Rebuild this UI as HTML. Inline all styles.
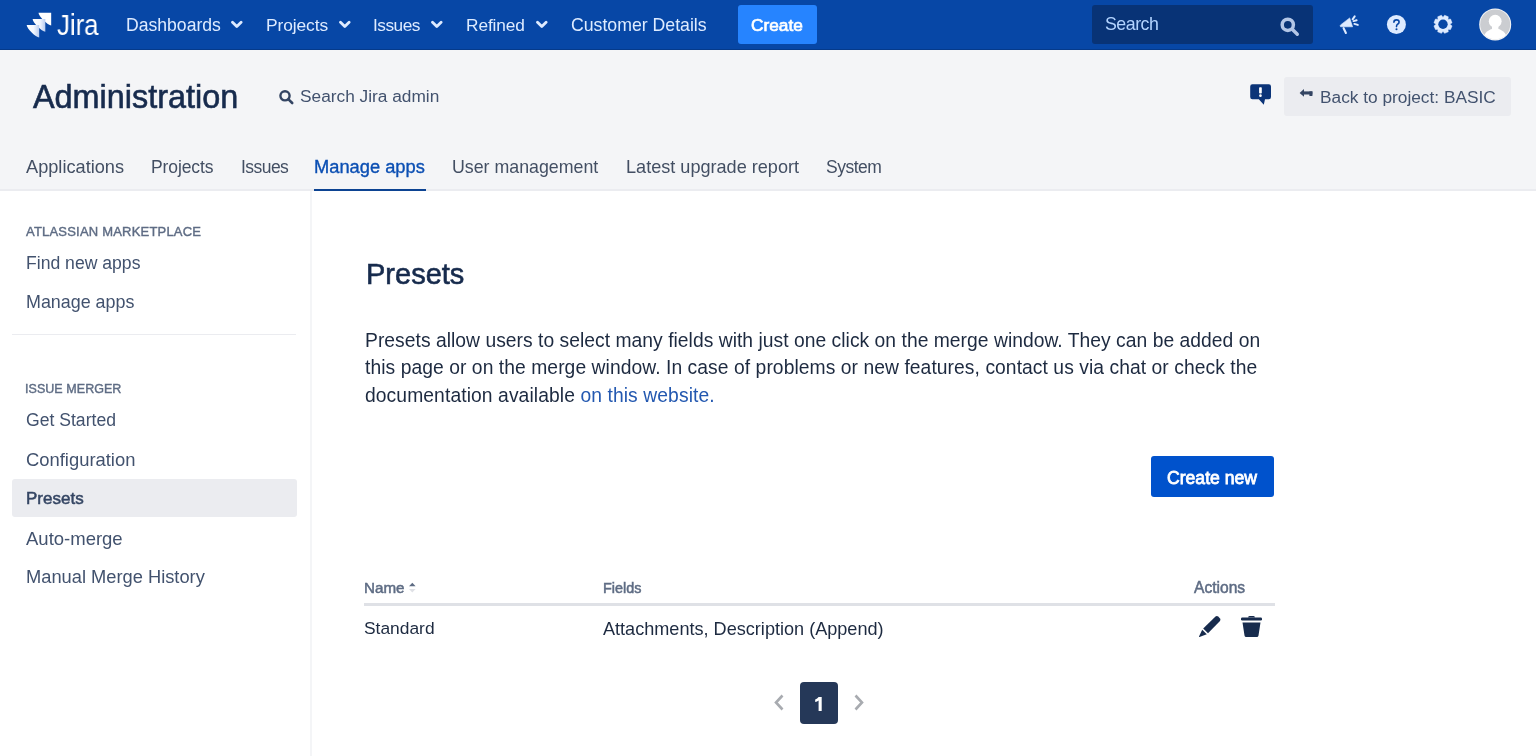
<!DOCTYPE html>
<html><head><meta charset="utf-8"><title>Presets - Administration</title>
<style>
html,body{margin:0;padding:0;width:1536px;height:756px;overflow:hidden;background:#fff;}
body{position:relative;font-family:"Liberation Sans",sans-serif;}
.t{position:absolute;white-space:nowrap;will-change:transform;}
</style></head><body>
<div style="position:absolute;left:0;top:0;width:1536px;height:50px;background:#0747a6"></div>
<div style="position:absolute;left:0;top:49px;width:1536px;height:1px;background:#053a8a"></div>
<svg style="position:absolute;left:0;top:0" width="60" height="50" viewBox="0 0 60 50"><defs><linearGradient id="lg" x1="0" y1="0" x2="1" y2="0"><stop offset="0" stop-color="#ffffff"/><stop offset="0.55" stop-color="#f4f8ff"/><stop offset="1" stop-color="#b9cdf0"/></linearGradient></defs><path d="M38.5 12.7 L51.2 12.7 L51.2 25.4 C47.77 25.4 38.5 16.13 38.5 12.7 Z" fill="#fff"/><path d="M32.6 19.0 L45.3 19.0 L45.3 31.7 C41.87 31.7 32.6 22.43 32.6 19.0 Z" fill="url(#lg)"/><path d="M26.7 25.0 L39.2 25.0 L39.2 37.5 C35.83 37.5 26.7 28.38 26.7 25.0 Z" fill="url(#lg)"/></svg>
<div class="t" style="left:57px;top:11.45px;font-size:29px;line-height:29px;color:#ffffff;font-weight:400;transform:scaleX(0.89);transform-origin:0 0;">Jira</div>

<div class="t" style="left:126px;top:16.60px;font-size:17.6px;line-height:17.6px;color:#deebff;font-weight:400;letter-spacing:0px;">Dashboards</div>

<svg style="position:absolute;left:231px;top:19px" width="12" height="11" viewBox="0 0 12 11"><path d="M1.5 3.2 L5.8 7.5 L10.1 3.2" stroke="#deebff" stroke-width="2.8" fill="none" stroke-linecap="round" stroke-linejoin="round"/></svg>
<div class="t" style="left:266px;top:16.77px;font-size:17.4px;line-height:17.4px;color:#deebff;font-weight:400;letter-spacing:-0.1px;">Projects</div>

<svg style="position:absolute;left:339px;top:19px" width="12" height="11" viewBox="0 0 12 11"><path d="M1.5 3.2 L5.8 7.5 L10.1 3.2" stroke="#deebff" stroke-width="2.8" fill="none" stroke-linecap="round" stroke-linejoin="round"/></svg>
<div class="t" style="left:373px;top:16.86px;font-size:17.3px;line-height:17.3px;color:#deebff;font-weight:400;letter-spacing:-0.5px;">Issues</div>

<svg style="position:absolute;left:431px;top:19px" width="12" height="11" viewBox="0 0 12 11"><path d="M1.5 3.2 L5.8 7.5 L10.1 3.2" stroke="#deebff" stroke-width="2.8" fill="none" stroke-linecap="round" stroke-linejoin="round"/></svg>
<div class="t" style="left:466px;top:16.86px;font-size:17.3px;line-height:17.3px;color:#deebff;font-weight:400;letter-spacing:-0.1px;">Refined</div>

<svg style="position:absolute;left:536px;top:19px" width="12" height="11" viewBox="0 0 12 11"><path d="M1.5 3.2 L5.8 7.5 L10.1 3.2" stroke="#deebff" stroke-width="2.8" fill="none" stroke-linecap="round" stroke-linejoin="round"/></svg>
<div class="t" style="left:570.5px;top:16.52px;font-size:17.7px;line-height:17.7px;color:#deebff;font-weight:400;">Customer Details</div>

<div style="position:absolute;left:738px;top:5px;width:79px;height:39px;background:#2684ff;border-radius:3px"></div>
<div class="t" style="left:751px;top:16.86px;font-size:17.3px;line-height:17.3px;color:#ffffff;font-weight:400;-webkit-text-stroke:0.7px #fff;">Create</div>

<div style="position:absolute;left:1092px;top:5px;width:221px;height:39px;background:#083376;border-radius:3px"></div>
<div class="t" style="left:1105px;top:15.93px;font-size:17.8px;line-height:17.8px;color:#b3d4ff;font-weight:400;letter-spacing:-0.5px;">Search</div>

<svg style="position:absolute;left:1278px;top:15px" width="24" height="24" viewBox="0 0 24 24"><circle cx="9.8" cy="9.8" r="5.6" stroke="#b3c6e6" stroke-width="3.5" fill="none"/><path d="M14 14 L19.3 19.3" stroke="#b3c6e6" stroke-width="3.4" stroke-linecap="round"/></svg>
<svg style="position:absolute;left:1336px;top:12px" width="26" height="26" viewBox="0 0 26 26">
<path d="M4.6 12.9 Q3.6 13.9 4.6 14.8 L16.6 14.8 L13.7 5.9 Z" fill="#deebff" stroke="#deebff" stroke-width="0.6" stroke-linejoin="round"/>
<path d="M7.6 16.2 L9.9 21" stroke="#deebff" stroke-width="2.1" stroke-linecap="round"/>
<path d="M16.6 7.3 L18.7 4.4" stroke="#deebff" stroke-width="2" stroke-linecap="round"/>
<path d="M17.5 9.1 L20.6 8.3" stroke="#deebff" stroke-width="2" stroke-linecap="round"/>
<path d="M18.4 11.9 L21.8 12.9" stroke="#deebff" stroke-width="2" stroke-linecap="round"/>
</svg>
<svg style="position:absolute;left:1384px;top:12px" width="25" height="25" viewBox="0 0 25 25">
<circle cx="12.4" cy="12.5" r="9.5" fill="#deebff"/>
<path d="M9.9 10.3 Q9.9 7.9 12.5 7.9 Q15.1 7.9 15.1 10.1 Q15.1 11.5 13.6 12.3 Q12.5 12.9 12.5 14.6" stroke="#0747a6" stroke-width="1.6" fill="none" stroke-linecap="round"/>
<circle cx="12.5" cy="17.3" r="1.05" fill="#0747a6"/>
</svg>
<svg style="position:absolute;left:1430px;top:12px" width="26" height="26" viewBox="0 0 26 26">
<path d="M19.90 12.25 L22.06 13.88 L20.53 17.59 L17.84 17.21 L17.91 17.14 L18.29 19.83 L14.58 21.36 L12.95 19.20 L13.05 19.20 L11.42 21.36 L7.71 19.83 L8.09 17.14 L8.16 17.21 L5.47 17.59 L3.94 13.88 L6.10 12.25 L6.10 12.35 L3.94 10.72 L5.47 7.01 L8.16 7.39 L8.09 7.46 L7.71 4.77 L11.42 3.24 L13.05 5.40 L12.95 5.40 L14.58 3.24 L18.29 4.77 L17.91 7.46 L17.84 7.39 L20.53 7.01 L22.06 10.72 L19.90 12.35 Z" fill="#deebff" stroke="#deebff" stroke-width="0.5" stroke-linejoin="round"/>
<circle cx="13" cy="12.3" r="4.7" fill="#0747a6"/>
</svg>
<svg style="position:absolute;left:1478px;top:7px" width="35" height="35" viewBox="0 0 35 35">
<defs><clipPath id="av"><circle cx="17.2" cy="17.4" r="15"/></clipPath></defs>
<circle cx="17.2" cy="17.4" r="16" fill="#f4f5f7"/>
<circle cx="17.2" cy="17.4" r="15" fill="#cbcdd1"/>
<g clip-path="url(#av)"><circle cx="17.2" cy="14.2" r="6.4" fill="#fff"/><rect x="14" y="17" width="6.4" height="6" fill="#fff"/><ellipse cx="17.2" cy="31.5" rx="11.5" ry="10" fill="#fff"/></g>
</svg>
<div style="position:absolute;left:0;top:50px;width:1536px;height:141px;background:#f4f5f7"></div>
<div style="position:absolute;left:0;top:189px;width:1536px;height:2px;background:#ebecf0"></div>
<div class="t" style="left:32.5px;top:80.87px;font-size:32.4px;line-height:32.4px;color:#172b4d;font-weight:400;-webkit-text-stroke:0.6px #172b4d;">Administration</div>

<svg style="position:absolute;left:278px;top:89px" width="17" height="16" viewBox="0 0 17 16"><circle cx="7" cy="6.8" r="4.6" stroke="#344563" stroke-width="2.4" fill="none"/><path d="M10.5 10.3 L14.2 14" stroke="#344563" stroke-width="2.6" stroke-linecap="round"/></svg>
<div class="t" style="left:300.2px;top:88.46px;font-size:17.3px;line-height:17.3px;color:#42526e;font-weight:400;">Search Jira admin</div>

<svg style="position:absolute;left:1248px;top:82px" width="25" height="25" viewBox="0 0 25 25">
<path d="M4.4 2.2 L20.8 2.2 Q23 2.2 23 4.4 L23 15.1 Q23 17.3 20.8 17.3 L17 17.3 L15.8 22.7 L10.8 17.3 L4.4 17.3 Q2.2 17.3 2.2 15.1 L2.2 4.4 Q2.2 2.2 4.4 2.2 Z" fill="#0b3478"/>
<rect x="11.1" y="5.3" width="2.7" height="6.2" rx="0.8" fill="#fff"/><circle cx="12.45" cy="13.7" r="1.35" fill="#fff"/>
</svg>
<div style="position:absolute;left:1284px;top:77px;width:227px;height:39px;background:#ebecf0;border-radius:3px"></div>
<svg style="position:absolute;left:1298px;top:86px" width="16" height="14" viewBox="0 0 16 14"><path d="M1.6 6.9 L6 2.9 L6 10.8 Z" fill="#344563"/><rect x="5" y="5.4" width="9.4" height="3.1" fill="#344563"/><rect x="11.4" y="5.4" width="3" height="4.6" fill="#344563"/></svg>
<div class="t" style="left:1320px;top:88.56px;font-size:17.3px;line-height:17.3px;color:#42526e;font-weight:400;">Back to project: BASIC</div>

<div class="t" style="left:25.8px;top:158.19px;font-size:18.2px;line-height:18.2px;color:#434f63;font-weight:400;letter-spacing:0px;">Applications</div>

<div class="t" style="left:151px;top:158.79px;font-size:17.5px;line-height:17.5px;color:#434f63;font-weight:400;letter-spacing:-0.1px;">Projects</div>

<div class="t" style="left:240.6px;top:158.79px;font-size:17.5px;line-height:17.5px;color:#434f63;font-weight:400;letter-spacing:-0.55px;">Issues</div>

<div class="t" style="left:314.2px;top:158.11px;font-size:18.3px;line-height:18.3px;color:#0b4fb3;font-weight:400;letter-spacing:0px;-webkit-text-stroke:0.35px #0b4fb3;">Manage apps</div>

<div class="t" style="left:452px;top:158.53px;font-size:17.8px;line-height:17.8px;color:#434f63;font-weight:400;letter-spacing:0px;">User management</div>

<div class="t" style="left:625.7px;top:158.28px;font-size:18.1px;line-height:18.1px;color:#434f63;font-weight:400;letter-spacing:0px;">Latest upgrade report</div>

<div class="t" style="left:826.3px;top:158.79px;font-size:17.5px;line-height:17.5px;color:#434f63;font-weight:400;letter-spacing:-0.5px;">System</div>

<div style="position:absolute;left:314px;top:189px;width:111.5px;height:2px;background:#0c4392"></div>
<div style="position:absolute;left:310px;top:191px;width:2px;height:565px;background:#f4f5f7"></div>
<div class="t" style="left:26px;top:224.60px;font-size:13.0px;line-height:13.0px;color:#5e6c84;font-weight:400;letter-spacing:0.2px;-webkit-text-stroke:0.4px #5e6c84;">ATLASSIAN MARKETPLACE</div>

<div class="t" style="left:26px;top:255.10px;font-size:17.6px;line-height:17.6px;color:#42526e;font-weight:400;">Find new apps</div>

<div class="t" style="left:26px;top:293.85px;font-size:17.9px;line-height:17.9px;color:#42526e;font-weight:400;">Manage apps</div>

<div style="position:absolute;left:12px;top:334px;width:284px;height:1px;background:#ebecf0"></div>
<div class="t" style="left:25.4px;top:382.72px;font-size:12.5px;line-height:12.5px;color:#5e6c84;font-weight:400;letter-spacing:0.05px;-webkit-text-stroke:0.4px #5e6c84;">ISSUE MERGER</div>

<div class="t" style="left:26px;top:412.40px;font-size:17.6px;line-height:17.6px;color:#42526e;font-weight:400;">Get Started</div>

<div class="t" style="left:26px;top:451.42px;font-size:18.4px;line-height:18.4px;color:#42526e;font-weight:400;">Configuration</div>

<div style="position:absolute;left:12px;top:479px;width:285px;height:38px;background:#ebecf0;border-radius:3px"></div>
<div class="t" style="left:26px;top:490.11px;font-size:17.0px;line-height:17.0px;color:#344563;font-weight:400;-webkit-text-stroke:0.5px #344563;">Presets</div>

<div class="t" style="left:26px;top:529.54px;font-size:18.5px;line-height:18.5px;color:#42526e;font-weight:400;">Auto-merge</div>

<div class="t" style="left:26px;top:567.81px;font-size:18.3px;line-height:18.3px;color:#42526e;font-weight:400;">Manual Merge History</div>

<div class="t" style="left:366px;top:260.15px;font-size:29px;line-height:29px;color:#172b4d;font-weight:400;-webkit-text-stroke:0.6px #172b4d;">Presets</div>

<div class="t" style="left:364.6px;top:331.16px;font-size:19.3px;line-height:19.3px;color:#1d2a40;font-weight:400;white-space:nowrap;letter-spacing:0.027px;">Presets allow users to select many fields with just one click on the merge window. They can be added on</div>

<div class="t" style="left:364.6px;top:358.06px;font-size:19.3px;line-height:19.3px;color:#1d2a40;font-weight:400;white-space:nowrap;letter-spacing:0.058px;">this page or on the merge window. In case of problems or new features, contact us via chat or check the</div>

<div class="t" style="left:364.6px;top:385.96px;font-size:19.3px;line-height:19.3px;color:#1d2a40;font-weight:400;white-space:nowrap;letter-spacing:0.088px;">documentation available <span style="color:#2358b0">on this website.</span></div>

<div style="position:absolute;left:1151px;top:456px;width:123px;height:41px;background:#0052cc;border-radius:3px"></div>
<div class="t" style="left:1167.3px;top:469.80px;font-size:17.6px;line-height:17.6px;color:#ffffff;font-weight:400;-webkit-text-stroke:0.8px #fff;">Create new</div>

<div class="t" style="left:364.4px;top:580.13px;font-size:15.2px;line-height:15.2px;color:#5e6c84;font-weight:400;-webkit-text-stroke:0.5px #5e6c84;">Name</div>

<svg style="position:absolute;left:407px;top:581px" width="11" height="14" viewBox="0 0 11 14"><path d="M2 5.3 L5.3 1.8 L8.6 5.3 Z" fill="#5e6c84"/><path d="M2 8 L5.3 11.5 L8.6 8 Z" fill="#dfe1e6"/></svg>
<div class="t" style="left:602.7px;top:580.81px;font-size:14.4px;line-height:14.4px;color:#5e6c84;font-weight:400;-webkit-text-stroke:0.5px #5e6c84;">Fields</div>

<div class="t" style="left:1194.3px;top:579.79px;font-size:15.6px;line-height:15.6px;color:#5e6c84;font-weight:400;-webkit-text-stroke:0.5px #5e6c84;">Actions</div>

<div style="position:absolute;left:364px;top:603px;width:911px;height:3px;background:#dfe1e6"></div>
<div class="t" style="left:364.4px;top:620.27px;font-size:17.4px;line-height:17.4px;color:#1d2a40;font-weight:400;">Standard</div>

<div class="t" style="left:602.5px;top:619.68px;font-size:18.1px;line-height:18.1px;color:#1d2a40;font-weight:400;">Attachments, Description (Append)</div>

<svg style="position:absolute;left:1196px;top:613px" width="28" height="28" viewBox="0 0 28 28">
<path d="M19.5 3.5 Q21 2.5 22.5 3.8 L23.8 5.2 Q25 6.5 24 8 L12 20.2 L7.2 15.5 Z" fill="#172b4d"/>
<path d="M6.2 16.8 L10.8 21.3 L3.5 24 Q2.8 24.2 3 23.5 Z" fill="#172b4d"/>
</svg>
<svg style="position:absolute;left:1238px;top:613px" width="27" height="27" viewBox="0 0 27 27">
<path d="M10 4.5 Q10 3 11.5 3 L15.5 3 Q17 3 17 4.5 Z" fill="#172b4d"/>
<rect x="3" y="4.5" width="21" height="3" rx="1.2" fill="#172b4d"/>
<path d="M4.5 9.5 L22.5 9.5 L20.5 22.5 Q20.3 24 18.8 24 L8.2 24 Q6.7 24 6.5 22.5 Z" fill="#172b4d"/>
</svg>
<svg style="position:absolute;left:772px;top:692px" width="14" height="21" viewBox="0 0 14 21"><path d="M10.5 3.5 L4 10.5 L10.5 17.5" stroke="#a8abb0" stroke-width="2.6" fill="none"/></svg>
<div style="position:absolute;left:800px;top:682px;width:38px;height:42px;background:#253858;border-radius:4px"></div>
<svg style="position:absolute;left:810px;top:694px" width="16" height="20" viewBox="0 0 16 20"><path d="M8.6 3 L11.7 3 L11.7 17 L8.6 17 L8.6 6.6 Q7.2 7.6 5.2 8.1 L5.2 5.5 Q7.3 4.6 8.6 3 Z" fill="#fff"/></svg>
<svg style="position:absolute;left:852px;top:692px" width="14" height="21" viewBox="0 0 14 21"><path d="M3.5 3.5 L10 10.5 L3.5 17.5" stroke="#a8abb0" stroke-width="2.6" fill="none"/></svg>
</body></html>
